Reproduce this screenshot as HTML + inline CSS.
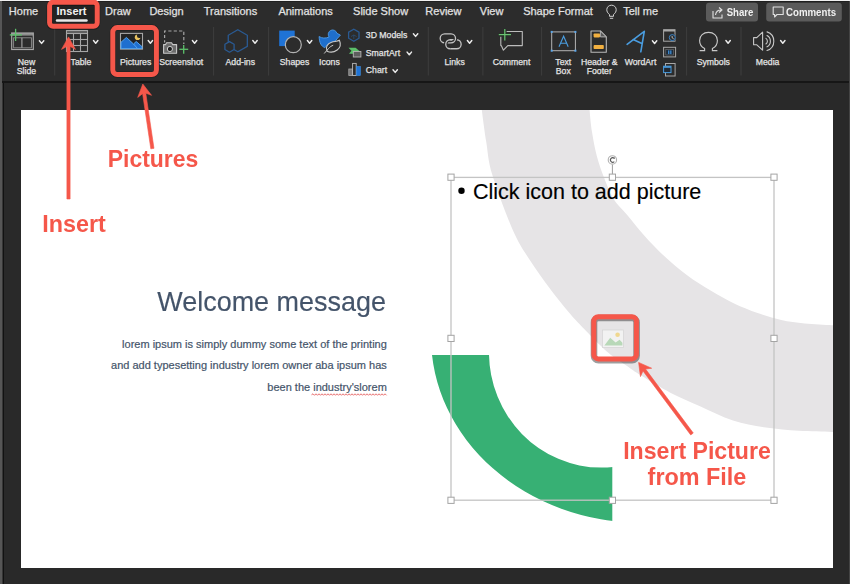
<!DOCTYPE html>
<html><head><meta charset="utf-8">
<style>
html,body{margin:0;padding:0;}
body{width:850px;height:584px;position:relative;overflow:hidden;background:#292929;font-family:'Liberation Sans', sans-serif;}
</style></head><body>
<div style="position:absolute;left:0;top:0;width:850px;height:82px;background:#2c2c2c"></div>
<div style="position:absolute;left:0;top:0;width:850px;height:1px;background:#f0f0f0"></div>
<div style="position:absolute;left:0;top:1px;width:850px;height:1px;background:#1f1f1f"></div>
<div style="position:absolute;left:0;top:81px;width:850px;height:2px;background:#161616"></div>
<div style="position:absolute;left:0;top:1px;width:1.5px;height:583px;background:#565656"></div>
<div style="position:absolute;left:1.5px;top:83px;width:1.5px;height:501px;background:#363636"></div>
<div style="position:absolute;left:3px;top:83px;width:1px;height:501px;background:#121212"></div>
<div style="position:absolute;left:848.5px;top:1px;width:1.5px;height:583px;background:#444"></div>
<svg style="position:absolute;left:0;top:0" width="850" height="82" viewBox="0 0 850 82"><rect x="51" y="4" width="45" height="21" fill="#222"/><rect x="54.2" y="27" width="1" height="48.5" fill="#3e3e3e"/><rect x="213.1" y="27" width="1" height="48.5" fill="#3e3e3e"/><rect x="268.1" y="27" width="1" height="48.5" fill="#3e3e3e"/><rect x="427.8" y="27" width="1" height="48.5" fill="#3e3e3e"/><rect x="482.4" y="27" width="1" height="48.5" fill="#3e3e3e"/><rect x="541.1" y="27" width="1" height="48.5" fill="#3e3e3e"/><rect x="686.1" y="27" width="1" height="48.5" fill="#3e3e3e"/><rect x="740.5" y="27" width="1" height="48.5" fill="#3e3e3e"/><rect x="11.7" y="33" width="21.6" height="16.5" fill="none" stroke="#a6a6a6" stroke-width="1.2"/><rect x="11.7" y="33" width="21.6" height="2.6" fill="#a6a6a6" opacity="0.8"/><rect x="13.6" y="37.8" width="17.8" height="10" fill="none" stroke="#a6a6a6" stroke-width="0.9" opacity="0.8"/><line x1="21.9" y1="37.8" x2="21.9" y2="47.8" stroke="#a6a6a6" stroke-width="1.1"/><line x1="9.8" y1="34.9" x2="21.9" y2="34.9" stroke="#5cc06a" stroke-width="1.3"/><line x1="15.6" y1="28.8" x2="15.6" y2="41" stroke="#5cc06a" stroke-width="1.3"/><path d="M39.4 40.7 L41.6 43.4 L43.8 40.7" fill="none" stroke="#ececec" stroke-width="1.45" stroke-linecap="round" stroke-linejoin="round"/><rect x="66.5" y="30.5" width="21" height="3" fill="#5c5c5c"/><rect x="66.5" y="30.5" width="21" height="21" fill="none" stroke="#a6a6a6" stroke-width="1.1"/><line x1="66.5" y1="33.5" x2="87.5" y2="33.5" stroke="#a6a6a6" stroke-width="1.1"/><line x1="66.5" y1="39.5" x2="87.5" y2="39.5" stroke="#a6a6a6" stroke-width="1.1"/><line x1="66.5" y1="45.5" x2="87.5" y2="45.5" stroke="#a6a6a6" stroke-width="1.1"/><line x1="73.5" y1="33.5" x2="73.5" y2="51.5" stroke="#a6a6a6" stroke-width="1.1"/><line x1="80.5" y1="33.5" x2="80.5" y2="51.5" stroke="#a6a6a6" stroke-width="1.1"/><path d="M93.5 40.5 L95.7 43.2 L97.9 40.5" fill="none" stroke="#ececec" stroke-width="1.45" stroke-linecap="round" stroke-linejoin="round"/><rect x="120.5" y="33.4" width="22" height="15.7" fill="#232323" stroke="#a6a6a6" stroke-width="1.1"/><path d="M121 42.3 L126.4 37.4 L133.5 44 L136.2 41.5 L142 46.6 L142 48.6 L121 48.6 Z" fill="#1f6fcf" stroke="#56a4ec" stroke-width="1" stroke-linejoin="round"/><path d="M133.5 44 L137.6 48.6" stroke="#56a4ec" stroke-width="1"/><mask id="moon"><rect x="130" y="30" width="15" height="12" fill="#fff"/><circle cx="139.2" cy="35.8" r="2.3" fill="#000"/></mask><circle cx="137.6" cy="37.2" r="2.8" fill="#e8c25e" mask="url(#moon)"/><path d="M148.2 40.5 L150.4 43.2 L152.6 40.5" fill="none" stroke="#ececec" stroke-width="1.45" stroke-linecap="round" stroke-linejoin="round"/><path d="M164.6 42.5 V31 H183.8 V44" fill="none" stroke="#a6a6a6" stroke-width="1.2" stroke-dasharray="3.2 2.2" stroke-dashoffset="1"/><path d="M163.6 44.6 H165.6 L166.6 42.8 H171.6 L172.6 44.6 H176.6 V53.2 H163.6 Z" fill="#6b6b6b" stroke="#c8c8c8" stroke-width="1.1" stroke-linejoin="round"/><circle cx="169.9" cy="49" r="2.6" fill="#1e1e1e" stroke="#cfcfcf" stroke-width="1"/><line x1="179.3" y1="49.3" x2="188.2" y2="49.3" stroke="#5cc06a" stroke-width="1.3"/><line x1="183.7" y1="45" x2="183.7" y2="53.8" stroke="#5cc06a" stroke-width="1.3"/><path d="M192.4 40.5 L194.6 43.2 L196.8 40.5" fill="none" stroke="#ececec" stroke-width="1.45" stroke-linecap="round" stroke-linejoin="round"/><path d="M237.80 51.80 L228.27 46.30 L228.27 35.30 L237.80 29.80 L247.33 35.30 L247.33 46.30 Z" fill="none" stroke="#2a5a92" stroke-width="1.3"/><path d="M229.50 52.20 L224.91 49.55 L224.91 44.25 L229.50 41.60 L234.09 44.25 L234.09 49.55 Z" fill="#2c2c2c" stroke="#2a5a92" stroke-width="1.3" stroke-linejoin="round"/><path d="M252.8 40.5 L255.0 43.2 L257.2 40.5" fill="none" stroke="#ececec" stroke-width="1.45" stroke-linecap="round" stroke-linejoin="round"/><rect x="279.2" y="30.6" width="15.5" height="15.5" fill="#1f73d6"/><circle cx="293.3" cy="44.7" r="8" fill="#2c2c2c" stroke="#b4b4b4" stroke-width="1.2"/><path d="M307.4 40.5 L309.6 43.2 L311.8 40.5" fill="none" stroke="#ececec" stroke-width="1.45" stroke-linecap="round" stroke-linejoin="round"/><path d="M319.1 36.5 C321.8 38.3 325.6 38.6 329.1 37 A4.4 4.4 0 1 1 336.9 33.3 L340.4 35.1 L337.6 38.2 C335.8 41 332.5 42.8 329 43.8 C327.5 45 326 46.4 324.8 47.6 C321.4 46.5 319.4 43 319.1 36.5 Z" fill="#1f6fcc" stroke="#4d9be6" stroke-width="0.9" stroke-linejoin="round"/><path d="M327.1 51.2 C325 47.5 327.5 43.5 331.5 42.2 C334.5 41.3 337.6 41.5 339.4 40.3 C340.8 43.5 340.6 47.5 337.2 50 C334.4 52 330 52.5 327.1 51.2 Z" fill="#2c2c2c" stroke="#c8c8c8" stroke-width="1.1"/><path d="M324.2 53.5 L328.5 48.5 C330 46.8 331.6 45.8 333.2 45.3" fill="none" stroke="#c8c8c8" stroke-width="1"/><path d="M353.80 41.20 L348.60 38.20 L348.60 32.20 L353.80 29.20 L359.00 32.20 L359.00 38.20 Z" fill="none" stroke="#2a5a92" stroke-width="1.3"/><path d="M351 36.5 L353.8 35 L356.6 36.5 M353.8 35 V39" fill="none" stroke="#2a5a92" stroke-width="0.8" opacity="0.7"/><path d="M413.4 33.7 L415.6 36.4 L417.8 33.7" fill="none" stroke="#ececec" stroke-width="1.45" stroke-linecap="round" stroke-linejoin="round"/><path d="M348.5 47.8 H355.6 L359.4 51 L355.6 53.8 H349 L351.5 50.8 Z" fill="#5cc06a"/><rect x="353.3" y="51.5" width="7.6" height="5.5" fill="#5e5e5e" stroke="#b4b4b4" stroke-width="0.9"/><path d="M407.1 52.1 L409.3 54.8 L411.5 52.1" fill="none" stroke="#ececec" stroke-width="1.45" stroke-linecap="round" stroke-linejoin="round"/><rect x="348.8" y="69" width="3.6" height="6.5" fill="#777" stroke="#a8a8a8" stroke-width="0.8"/><rect x="352.6" y="63.4" width="3.6" height="12.1" fill="none" stroke="#b8b8b8" stroke-width="0.9"/><rect x="356.5" y="66.5" width="3.8" height="9" fill="#1f73d6" stroke="#3b8fe6" stroke-width="0.6"/><path d="M393.0 69.7 L395.2 72.4 L397.4 69.7" fill="none" stroke="#ececec" stroke-width="1.45" stroke-linecap="round" stroke-linejoin="round"/><path d="M450.25 39.75 H456.65 A4.50 4.50 0 0 1 456.65 48.75 H450.25 A4.50 4.50 0 0 1 450.25 39.75 Z" fill="none" stroke="#c4c4c4" stroke-width="1.3"/><path d="M451.05 33.85 A4.5 4.5 0 0 1 451.05 42.85" fill="none" stroke="#2c2c2c" stroke-width="3.6"/><path d="M444.65 33.85 H451.05 A4.50 4.50 0 0 1 451.05 42.85 H444.65 A4.50 4.50 0 0 1 444.65 33.85 Z" fill="none" stroke="#c4c4c4" stroke-width="1.3"/><path d="M450.25 48.75 A4.5 4.5 0 0 1 450.25 39.75" fill="none" stroke="#2c2c2c" stroke-width="3.6"/><path d="M450.25 48.75 A4.5 4.5 0 0 1 450.25 39.75 H452" fill="none" stroke="#c4c4c4" stroke-width="1.3"/><path d="M467.4 40.5 L469.6 43.2 L471.8 40.5" fill="none" stroke="#ececec" stroke-width="1.45" stroke-linecap="round" stroke-linejoin="round"/><path d="M506.6 31.5 H522.3 V45.6 H507.8 L503.4 50.2 L501.3 45.6 H500.8 V36.8" fill="none" stroke="#bcbcbc" stroke-width="1.1" stroke-linejoin="round"/><line x1="498.8" y1="34.6" x2="511" y2="34.6" stroke="#1a3a1e" stroke-width="2.6" opacity="0.5"/><line x1="504.8" y1="28.9" x2="504.8" y2="40.4" stroke="#1a3a1e" stroke-width="2.6" opacity="0.5"/><line x1="498.8" y1="34.6" x2="511" y2="34.6" stroke="#6cc474" stroke-width="1.2"/><line x1="504.8" y1="28.9" x2="504.8" y2="40.4" stroke="#6cc474" stroke-width="1.2"/><rect x="551.7" y="31.9" width="23.7" height="18.8" fill="none" stroke="#b4b4b4" stroke-width="1"/><rect x="550.7" y="30.9" width="2" height="2" fill="#5aa6ea"/><rect x="574.4" y="30.9" width="2" height="2" fill="#5aa6ea"/><rect x="550.7" y="49.7" width="2" height="2" fill="#5aa6ea"/><rect x="574.4" y="49.7" width="2" height="2" fill="#5aa6ea"/><path d="M559 46.8 L563.6 36.2 L568.2 46.8 M560.6 43.2 H566.6" fill="none" stroke="#4a9de0" stroke-width="1.1"/><path d="M591 31 H600.4 L606.3 36.9 V52.3 H591 Z" fill="none" stroke="#b8b8b8" stroke-width="1.1" stroke-linejoin="round"/><path d="M600.4 31 V36.9 H606.3 Z" fill="#5a5a5a" stroke="#b8b8b8" stroke-width="0.9" stroke-linejoin="round"/><rect x="593.6" y="33.5" width="6.4" height="3.9" rx="0.8" fill="#f2b040"/><rect x="593.6" y="45.1" width="10.2" height="3.9" rx="0.8" fill="#f2b040"/><path d="M627.1 44.3 L644.3 31.3 L640.8 51.8 M633.1 39.6 L641.3 43.2" fill="none" stroke="#4a9de0" stroke-width="1.6" stroke-linecap="round" stroke-linejoin="round"/><path d="M652.4 40.8 L654.6 43.5 L656.8 40.8" fill="none" stroke="#ececec" stroke-width="1.45" stroke-linecap="round" stroke-linejoin="round"/><rect x="663.6" y="29.7" width="11.4" height="11.5" fill="none" stroke="#a8a8a8" stroke-width="1"/><rect x="663.6" y="29.7" width="11.4" height="1.8" fill="#a8a8a8"/><circle cx="672.3" cy="37.6" r="3.5" fill="#2c2c2c"/><circle cx="672.3" cy="37.6" r="3" fill="none" stroke="#3d86c9" stroke-width="1"/><path d="M672.1 36 V37.8 L673.6 38.6" fill="none" stroke="#dcdcdc" stroke-width="0.8"/><rect x="663.6" y="47.3" width="12" height="9.6" fill="none" stroke="#a8a8a8" stroke-width="1"/><rect x="665.8" y="49.5" width="7.6" height="5.5" fill="#1b2a3a" stroke="#777" stroke-width="0.6"/><rect x="668" y="50.4" width="1.4" height="3.7" fill="#3d86c9"/><rect x="670.1" y="50.4" width="1.4" height="3.7" fill="#3d86c9"/><rect x="665.5" y="63.5" width="9.6" height="12.5" fill="none" stroke="#a8a8a8" stroke-width="1"/><rect x="663.6" y="66.2" width="7.4" height="6.4" fill="#232a33" stroke="#4a9de0" stroke-width="1"/><rect x="663.6" y="66.2" width="7.4" height="1.6" fill="#4a9de0"/><path d="M699.6 50.6 H704.6 V48.6 C701 46.6 699.6 43.6 699.6 40.4 C699.6 35.6 703.4 32.4 708.5 32.4 C713.6 32.4 717.4 35.6 717.4 40.4 C717.4 43.6 716 46.6 712.4 48.6 V50.6 H717.4" fill="none" stroke="#c8c8c8" stroke-width="1.15"/><path d="M725.9 40.5 L728.1 43.2 L730.3 40.5" fill="none" stroke="#ececec" stroke-width="1.45" stroke-linecap="round" stroke-linejoin="round"/><path d="M753.6 37.6 H756.8 L762.6 32.2 V50.2 L756.8 44.8 H753.6 Z" fill="none" stroke="#c8c8c8" stroke-width="1.1" stroke-linejoin="round"/><path d="M765.95 38.41 A3.4 3.4 0 0 1 765.95 43.99" fill="none" stroke="#c8c8c8" stroke-width="1.1" stroke-linecap="round"/><path d="M767.00 35.55 A6.4 6.4 0 0 1 767.00 46.85" fill="none" stroke="#c8c8c8" stroke-width="1.1" stroke-linecap="round"/><path d="M767.03 31.88 A9.8 9.8 0 0 1 767.03 50.52" fill="none" stroke="#c8c8c8" stroke-width="1.1" stroke-linecap="round"/><path d="M780.6 40.5 L782.8 43.2 L785.0 40.5" fill="none" stroke="#ececec" stroke-width="1.45" stroke-linecap="round" stroke-linejoin="round"/><path d="M609.5 16.3 V14.5 C607.5 13 606.8 11.5 606.8 9.6 C606.8 7 609 5.2 611.5 5.2 C614 5.2 616.2 7 616.2 9.6 C616.2 11.5 615.5 13 613.5 14.5 V16.3 Z M609.8 18.3 H613.2" fill="none" stroke="#d0d0d0" stroke-width="1"/><rect x="706" y="2.8" width="52" height="18.8" rx="3" fill="#5b5b5b"/><rect x="766.2" y="2.8" width="75.6" height="18.8" rx="3" fill="#5b5b5b"/><path d="M713 11 V18 H722 V14.5 M715.5 15 C716 11.5 718 10 721 10 M719 7.5 L722 10 L719 12.5" fill="none" stroke="#e0e0e0" stroke-width="1.1" stroke-linejoin="round"/><path d="M773.2 7 H783.2 V14.5 H777 L774.6 17 V14.5 H773.2 Z" fill="none" stroke="#e0e0e0" stroke-width="1.1" stroke-linejoin="round"/><line x1="57" y1="20.5" x2="86.5" y2="20.5" stroke="#e8e8e8" stroke-width="2.4" stroke-linecap="round"/></svg>
<div style="position:absolute;left:-126.50px;top:5.69px;width:300px;text-align:center;font:400 11px/1 'Liberation Sans', sans-serif;color:#e2e2e2;white-space:nowrap;-webkit-text-stroke:0.25px #e2e2e2;">Home</div>
<div style="position:absolute;left:-32.10px;top:5.69px;width:300px;text-align:center;font:400 11px/1 'Liberation Sans', sans-serif;color:#e2e2e2;white-space:nowrap;-webkit-text-stroke:0.25px #e2e2e2;">Draw</div>
<div style="position:absolute;left:16.50px;top:5.69px;width:300px;text-align:center;font:400 11px/1 'Liberation Sans', sans-serif;color:#e2e2e2;white-space:nowrap;-webkit-text-stroke:0.25px #e2e2e2;">Design</div>
<div style="position:absolute;left:80.50px;top:5.69px;width:300px;text-align:center;font:400 11px/1 'Liberation Sans', sans-serif;color:#e2e2e2;white-space:nowrap;-webkit-text-stroke:0.25px #e2e2e2;">Transitions</div>
<div style="position:absolute;left:155.60px;top:5.69px;width:300px;text-align:center;font:400 11px/1 'Liberation Sans', sans-serif;color:#e2e2e2;white-space:nowrap;-webkit-text-stroke:0.25px #e2e2e2;">Animations</div>
<div style="position:absolute;left:230.60px;top:5.69px;width:300px;text-align:center;font:400 11px/1 'Liberation Sans', sans-serif;color:#e2e2e2;white-space:nowrap;-webkit-text-stroke:0.25px #e2e2e2;">Slide Show</div>
<div style="position:absolute;left:293.40px;top:5.69px;width:300px;text-align:center;font:400 11px/1 'Liberation Sans', sans-serif;color:#e2e2e2;white-space:nowrap;-webkit-text-stroke:0.25px #e2e2e2;">Review</div>
<div style="position:absolute;left:341.60px;top:5.69px;width:300px;text-align:center;font:400 11px/1 'Liberation Sans', sans-serif;color:#e2e2e2;white-space:nowrap;-webkit-text-stroke:0.25px #e2e2e2;">View</div>
<div style="position:absolute;left:408.00px;top:5.69px;width:300px;text-align:center;font:400 11px/1 'Liberation Sans', sans-serif;color:#e2e2e2;white-space:nowrap;-webkit-text-stroke:0.25px #e2e2e2;">Shape Format</div>
<div style="position:absolute;left:490.60px;top:5.69px;width:300px;text-align:center;font:400 11px/1 'Liberation Sans', sans-serif;color:#e2e2e2;white-space:nowrap;-webkit-text-stroke:0.25px #e2e2e2;">Tell me</div>
<div style="position:absolute;left:-78.50px;top:5.69px;width:300px;text-align:center;font:700 11px/1 'Liberation Sans', sans-serif;color:#f2f2f2;white-space:nowrap;">Insert</div>
<div style="position:absolute;left:-123.50px;top:57.84px;width:300px;text-align:center;font:400 8.7px/1 'Liberation Sans', sans-serif;color:#e4e4e4;white-space:nowrap;-webkit-text-stroke:0.25px #e4e4e4;">New</div>
<div style="position:absolute;left:-123.50px;top:67.34px;width:300px;text-align:center;font:400 8.7px/1 'Liberation Sans', sans-serif;color:#e4e4e4;white-space:nowrap;-webkit-text-stroke:0.25px #e4e4e4;">Slide</div>
<div style="position:absolute;left:-69.00px;top:57.84px;width:300px;text-align:center;font:400 8.7px/1 'Liberation Sans', sans-serif;color:#e4e4e4;white-space:nowrap;-webkit-text-stroke:0.25px #e4e4e4;">Table</div>
<div style="position:absolute;left:-14.40px;top:57.84px;width:300px;text-align:center;font:400 8.7px/1 'Liberation Sans', sans-serif;color:#e4e4e4;white-space:nowrap;-webkit-text-stroke:0.25px #e4e4e4;">Pictures</div>
<div style="position:absolute;left:31.20px;top:57.84px;width:300px;text-align:center;font:400 8.7px/1 'Liberation Sans', sans-serif;color:#e4e4e4;white-space:nowrap;-webkit-text-stroke:0.25px #e4e4e4;">Screenshot</div>
<div style="position:absolute;left:90.30px;top:57.84px;width:300px;text-align:center;font:400 8.7px/1 'Liberation Sans', sans-serif;color:#e4e4e4;white-space:nowrap;-webkit-text-stroke:0.25px #e4e4e4;">Add-ins</div>
<div style="position:absolute;left:144.50px;top:57.84px;width:300px;text-align:center;font:400 8.7px/1 'Liberation Sans', sans-serif;color:#e4e4e4;white-space:nowrap;-webkit-text-stroke:0.25px #e4e4e4;">Shapes</div>
<div style="position:absolute;left:179.40px;top:57.84px;width:300px;text-align:center;font:400 8.7px/1 'Liberation Sans', sans-serif;color:#e4e4e4;white-space:nowrap;-webkit-text-stroke:0.25px #e4e4e4;">Icons</div>
<div style="position:absolute;left:304.60px;top:57.84px;width:300px;text-align:center;font:400 8.7px/1 'Liberation Sans', sans-serif;color:#e4e4e4;white-space:nowrap;-webkit-text-stroke:0.25px #e4e4e4;">Links</div>
<div style="position:absolute;left:361.50px;top:57.84px;width:300px;text-align:center;font:400 8.7px/1 'Liberation Sans', sans-serif;color:#e4e4e4;white-space:nowrap;-webkit-text-stroke:0.25px #e4e4e4;">Comment</div>
<div style="position:absolute;left:413.30px;top:57.84px;width:300px;text-align:center;font:400 8.7px/1 'Liberation Sans', sans-serif;color:#e4e4e4;white-space:nowrap;-webkit-text-stroke:0.25px #e4e4e4;">Text</div>
<div style="position:absolute;left:413.30px;top:67.34px;width:300px;text-align:center;font:400 8.7px/1 'Liberation Sans', sans-serif;color:#e4e4e4;white-space:nowrap;-webkit-text-stroke:0.25px #e4e4e4;">Box</div>
<div style="position:absolute;left:449.30px;top:57.84px;width:300px;text-align:center;font:400 8.7px/1 'Liberation Sans', sans-serif;color:#e4e4e4;white-space:nowrap;-webkit-text-stroke:0.25px #e4e4e4;">Header &amp;</div>
<div style="position:absolute;left:449.30px;top:67.34px;width:300px;text-align:center;font:400 8.7px/1 'Liberation Sans', sans-serif;color:#e4e4e4;white-space:nowrap;-webkit-text-stroke:0.25px #e4e4e4;">Footer</div>
<div style="position:absolute;left:490.50px;top:57.84px;width:300px;text-align:center;font:400 8.7px/1 'Liberation Sans', sans-serif;color:#e4e4e4;white-space:nowrap;-webkit-text-stroke:0.25px #e4e4e4;">WordArt</div>
<div style="position:absolute;left:563.30px;top:57.84px;width:300px;text-align:center;font:400 8.7px/1 'Liberation Sans', sans-serif;color:#e4e4e4;white-space:nowrap;-webkit-text-stroke:0.25px #e4e4e4;">Symbols</div>
<div style="position:absolute;left:617.60px;top:57.84px;width:300px;text-align:center;font:400 8.7px/1 'Liberation Sans', sans-serif;color:#e4e4e4;white-space:nowrap;-webkit-text-stroke:0.25px #e4e4e4;">Media</div>
<div style="position:absolute;left:365.80px;top:31.04px;font:400 8.7px/1 'Liberation Sans', sans-serif;color:#e4e4e4;white-space:nowrap;-webkit-text-stroke:0.25px #e4e4e4;">3D Models</div>
<div style="position:absolute;left:365.80px;top:48.64px;font:400 8.7px/1 'Liberation Sans', sans-serif;color:#e4e4e4;white-space:nowrap;-webkit-text-stroke:0.25px #e4e4e4;">SmartArt</div>
<div style="position:absolute;left:365.80px;top:65.64px;font:400 8.7px/1 'Liberation Sans', sans-serif;color:#e4e4e4;white-space:nowrap;-webkit-text-stroke:0.25px #e4e4e4;">Chart</div>
<div style="position:absolute;left:589.80px;top:7.06px;width:300px;text-align:center;font:700 10.8px/1 'Liberation Sans', sans-serif;color:#f0f0f0;white-space:nowrap;transform:scaleX(0.89);transform-origin:50% 0;">Share</div>
<div style="position:absolute;left:661.40px;top:6.96px;width:300px;text-align:center;font:700 10.8px/1 'Liberation Sans', sans-serif;color:#f0f0f0;white-space:nowrap;transform:scaleX(0.897);transform-origin:50% 0;">Comments</div>
<svg style="position:absolute;left:0;top:0" width="850" height="584" viewBox="0 0 850 584"><defs><filter id="blr" x="-20%" y="-20%" width="140%" height="140%"><feGaussianBlur stdDeviation="0.7"/></filter><clipPath id="sl"><rect x="21" y="110" width="812" height="458"/></clipPath></defs><rect x="21" y="110" width="812" height="458" fill="#ffffff"/><path clip-path="url(#sl)" fill="#e6e4e6" d="M481.6 104 C481.67 105.23 481.22 105.03 482.00 111.40 C482.78 117.77 484.58 131.63 486.30 142.20 C488.02 152.77 487.83 160.03 492.30 174.80 C496.77 189.57 506.68 216.33 513.10 230.80 C519.52 245.27 524.77 252.10 530.80 261.60 C536.83 271.10 542.68 279.02 549.30 287.80 C555.92 296.58 564.68 307.43 570.50 314.30 C576.32 321.17 579.28 323.87 584.20 329.00 C589.12 334.13 595.65 340.87 600.00 345.10 C604.35 349.33 605.85 350.97 610.30 354.40 C614.75 357.83 621.57 362.18 626.70 365.70 C631.83 369.22 633.75 370.97 641.10 375.50 C648.45 380.03 660.98 387.78 670.80 392.90 C680.62 398.02 689.63 401.60 700.00 406.20 C710.37 410.80 722.02 416.93 733.00 420.50 C743.98 424.07 754.93 425.88 765.90 427.60 C776.87 429.32 787.82 430.08 798.80 430.80 C809.78 431.52 824.60 431.70 831.80 431.90 C839.00 432.10 840.30 431.98 842.00 432.00 L842 325.3 C840.30 325.28 838.02 325.50 831.80 325.20 C825.58 324.90 813.13 324.37 804.70 323.50 C796.27 322.63 789.05 321.75 781.20 320.00 C773.35 318.25 765.45 315.75 757.60 313.00 C749.75 310.25 741.93 307.23 734.10 303.50 C726.27 299.77 718.43 295.30 710.60 290.60 C702.77 285.90 694.83 281.05 687.10 275.30 C679.37 269.55 671.35 262.72 664.20 256.10 C657.05 249.48 650.37 242.45 644.20 235.60 C638.03 228.75 632.32 221.10 627.20 215.00 C622.08 208.90 617.37 205.25 613.50 199.00 C609.63 192.75 606.78 184.68 604.00 177.50 C601.22 170.32 598.80 163.48 596.80 155.90 C594.80 148.32 593.20 139.58 592.00 132.00 C590.80 124.42 590.02 115.07 589.60 110.40 C589.18 105.73 589.52 105.07 589.50 104.00 Z"/><clipPath id="gc"><rect x="400" y="354.9" width="212.3" height="200"/></clipPath><path clip-path="url(#gc)" fill-rule="evenodd" fill="#37b074" d="M431.00 336.90 A211.10 185.90 0 1 0 853.20 336.90 A211.10 185.90 0 1 0 431.00 336.90 Z M489.00 352.60 A112.30 115.00 0 1 0 713.60 352.60 A112.30 115.00 0 1 0 489.00 352.60 Z"/><rect x="451" y="177.4" width="323" height="322.8" fill="none" stroke="#c4c4c4" stroke-width="1.3"/><line x1="612.4" y1="164.6" x2="612.4" y2="177" stroke="#9c9c9c" stroke-width="1"/><circle cx="612.4" cy="159.9" r="4.2" fill="#fff" stroke="#b0b0b0" stroke-width="1.1"/><path d="M614.2 158.2 A2.3 2.3 0 1 0 614.3 161.7" fill="none" stroke="#555" stroke-width="1.1"/><circle cx="614.4" cy="158.1" r="0.7" fill="#555"/><rect x="447.9" y="174.1" width="6.2" height="6.2" fill="#fff" stroke="#a4a4a4" stroke-width="1"/><rect x="609.3" y="174.1" width="6.2" height="6.2" fill="#fff" stroke="#a4a4a4" stroke-width="1"/><rect x="770.9" y="174.1" width="6.2" height="6.2" fill="#fff" stroke="#a4a4a4" stroke-width="1"/><rect x="447.9" y="335.29999999999995" width="6.2" height="6.2" fill="#fff" stroke="#a4a4a4" stroke-width="1"/><rect x="770.9" y="335.29999999999995" width="6.2" height="6.2" fill="#fff" stroke="#a4a4a4" stroke-width="1"/><rect x="447.9" y="497.2" width="6.2" height="6.2" fill="#fff" stroke="#a4a4a4" stroke-width="1"/><rect x="609.3" y="497.2" width="6.2" height="6.2" fill="#fff" stroke="#a4a4a4" stroke-width="1"/><rect x="770.9" y="497.2" width="6.2" height="6.2" fill="#fff" stroke="#a4a4a4" stroke-width="1"/><circle cx="461.5" cy="190.8" r="3.2" fill="#000"/><path d="M311.5 394.8 L313.0 393.8 L314.5 395.3 L316.0 393.8 L317.5 395.3 L319.0 393.8 L320.5 395.3 L322.0 393.8 L323.5 395.3 L325.0 393.8 L326.5 395.3 L328.0 393.8 L329.5 395.3 L331.0 393.8 L332.5 395.3 L334.0 393.8 L335.5 395.3 L337.0 393.8 L338.5 395.3 L340.0 393.8 L341.5 395.3 L343.0 393.8 L344.5 395.3 L346.0 393.8 L347.5 395.3 L349.0 393.8 L350.5 395.3 L352.0 393.8 L353.5 395.3 L355.0 393.8 L356.5 395.3 L358.0 393.8 L359.5 395.3 L361.0 393.8 L362.5 395.3 L364.0 393.8 L365.5 395.3 L367.0 393.8 L368.5 395.3 L370.0 393.8 L371.5 395.3 L373.0 393.8 L374.5 395.3 L376.0 393.8 L377.5 395.3 L379.0 393.8 L380.5 395.3 L382.0 393.8 L383.5 395.3 L385.0 393.8 L386.5 395.3" fill="none" stroke="#e04a4a" stroke-width="0.8"/><rect x="602.5" y="330" width="21" height="17.5" fill="#f2f2f2" stroke="#d6d6d6" stroke-width="0.8"/><path d="M604.4 345.6 L610.2 337.8 L615.6 342.6 L619.6 339.8 L622.4 342.8 L622.4 345.6 Z" fill="#b8d8b8"/><circle cx="617.6" cy="334.8" r="2.3" fill="#f0d890"/><rect x="593.8" y="316.7" width="42.6" height="42.2" rx="4.5" fill="none" stroke="#000" stroke-opacity="0.38" stroke-width="6.6" transform="translate(0.2,1.3)" filter="url(#blr)"/><rect x="593.8" y="316.7" width="42.6" height="42.2" rx="4.5" fill="none" stroke="#f5574a" stroke-width="5"/><path d="M68.50 36.90 L75.50 49.40 L70.10 46.40 L70.10 199.00 L66.90 199.00 L66.90 46.40 L61.50 49.40 Z" fill="#f5574a" stroke="#f5574a" stroke-width="0.6" stroke-linejoin="round"/><path d="M142.80 84.00 L151.56 95.34 L145.78 93.16 L153.98 148.36 L150.82 148.84 L142.61 93.63 L137.71 97.39 Z" fill="#f5574a" stroke="#f5574a" stroke-width="0.6" stroke-linejoin="round"/><path d="M638.60 362.40 L651.68 368.24 L645.56 369.06 L693.28 433.04 L690.72 434.96 L643.00 370.97 L640.46 376.61 Z" fill="#f5574a" stroke="#f5574a" stroke-width="0.6" stroke-linejoin="round"/><rect x="49.6" y="2.8" width="47.6" height="24" rx="3.5" fill="none" stroke="#000" stroke-opacity="0.35" stroke-width="6"/><rect x="49.6" y="2.3" width="47.6" height="24" rx="3.5" fill="none" stroke="#f5574a" stroke-width="5"/><rect x="112.8" y="27.6" width="43.6" height="47" rx="4.5" fill="none" stroke="#000" stroke-opacity="0.35" stroke-width="6"/><rect x="112.8" y="27.6" width="43.6" height="47" rx="4.5" fill="none" stroke="#f5574a" stroke-width="5"/></svg>
<div style="position:absolute;left:473.00px;top:182.40px;font:400 21.5px/1 'Liberation Sans', sans-serif;color:#000;white-space:nowrap;-webkit-text-stroke:0.15px #000;">Click icon to add picture</div>
<div style="position:absolute;left:-214.00px;top:287.50px;width:600px;text-align:right;font:400 28px/1 'Liberation Sans', sans-serif;color:#44546a;white-space:nowrap;transform:scaleX(0.963);transform-origin:100% 0;-webkit-text-stroke:0.15px #44546a;">Welcome message</div>
<div style="position:absolute;left:-213.20px;top:339.49px;width:600px;text-align:right;font:400 11px/1 'Liberation Sans', sans-serif;color:#44546a;white-space:nowrap;-webkit-text-stroke:0.2px #44546a;">lorem ipsum is simply dummy some text of the printing</div>
<div style="position:absolute;left:-213.20px;top:359.69px;width:600px;text-align:right;font:400 11px/1 'Liberation Sans', sans-serif;color:#44546a;white-space:nowrap;-webkit-text-stroke:0.2px #44546a;">and add typesetting industry lorem owner aba ipsum has</div>
<div style="position:absolute;left:-213.20px;top:381.69px;width:600px;text-align:right;font:400 11px/1 'Liberation Sans', sans-serif;color:#44546a;white-space:nowrap;-webkit-text-stroke:0.2px #44546a;">been the industry'slorem</div>
<div style="position:absolute;left:3.40px;top:147.43px;width:300px;text-align:center;font:700 24.3px/1 'Liberation Sans', sans-serif;color:#f5574a;white-space:nowrap;transform:scaleX(0.945);transform-origin:50% 0;">Pictures</div>
<div style="position:absolute;left:-75.70px;top:212.23px;width:300px;text-align:center;font:700 24.3px/1 'Liberation Sans', sans-serif;color:#f5574a;white-space:nowrap;transform:scaleX(0.96);transform-origin:50% 0;">Insert</div>
<div style="position:absolute;left:546.90px;top:439.03px;width:300px;text-align:center;font:700 24.3px/1 'Liberation Sans', sans-serif;color:#f5574a;white-space:nowrap;transform:scaleX(0.951);transform-origin:50% 0;">Insert Picture</div>
<div style="position:absolute;left:546.90px;top:465.03px;width:300px;text-align:center;font:700 24.3px/1 'Liberation Sans', sans-serif;color:#f5574a;white-space:nowrap;transform:scaleX(0.963);transform-origin:50% 0;">from File</div>
</body></html>
